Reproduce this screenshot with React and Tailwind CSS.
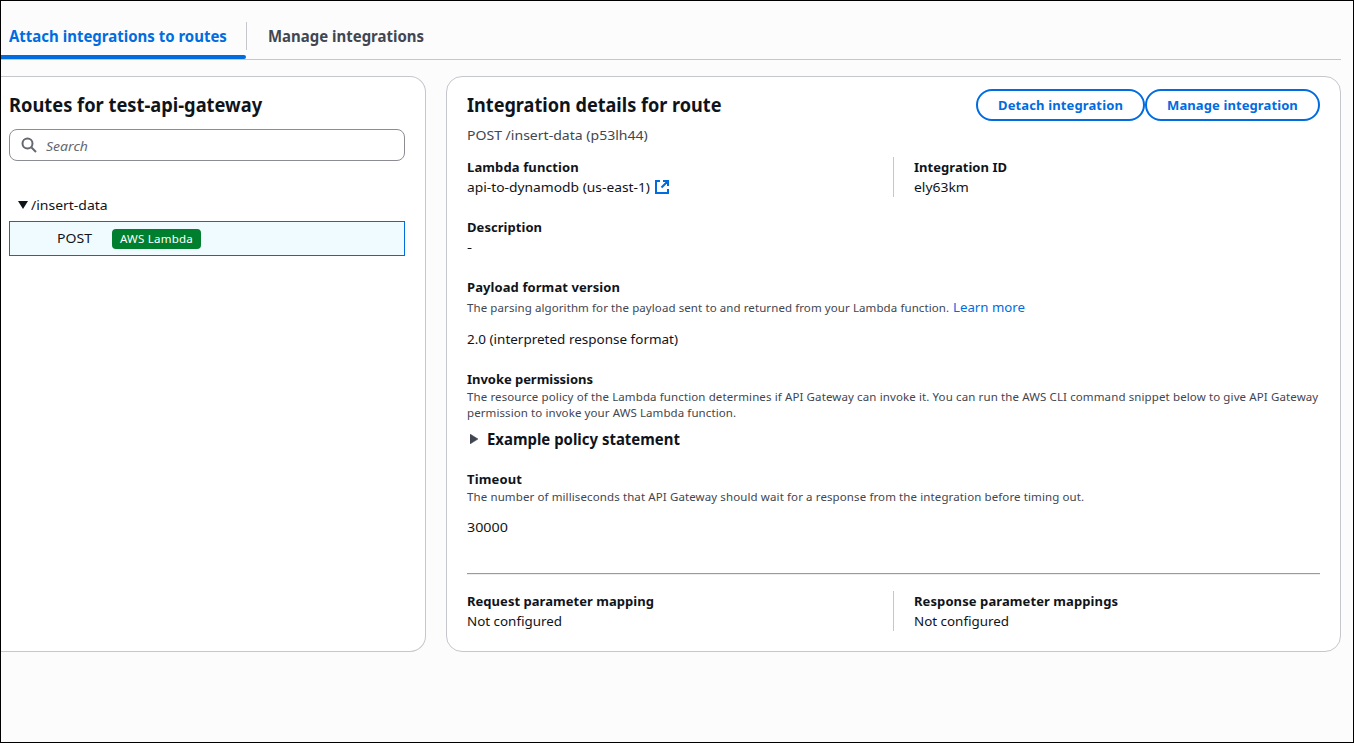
function T({ className = "", children }) {
  return <span className={"inline-block origin-left whitespace-nowrap " + className}>{children}</span>;
}

const label = "block h-5 text-[13px] leading-5 font-bold text-[#0f141a]";
const value = "block h-5 text-[13px] leading-5 text-[#0f141a]";
const hint = "block h-4 text-[11.5px] leading-4 text-[#424650]";
const button = "h-8 rounded-full border-2 border-[#006ce0] pt-px text-[13px] font-bold text-[#006ce0]";

function Pair({ children }) {
  return <div className="grid grid-cols-[426px_1fr]">{children}</div>;
}

export default function App() {
  return (
    <div className="h-[743px] w-[1354px] overflow-hidden border border-black bg-[#fcfcfd] font-['Noto_Sans',sans-serif] text-[#0f141a]">
      <nav className="mr-3 flex h-[59px] border-b border-[#c6c6cd] pt-[21px]">
        <div className="flex h-[37px] w-[245px] flex-col justify-between pt-0.5">
          <T className="ml-2 scale-x-[0.936] text-base leading-6 font-bold text-[#006ce0]">Attach integrations to routes</T>
          <div className="h-1 rounded-r-sm bg-[#006ce0]" />
        </div>
        <div className="h-7 border-l border-[#c6c6cd] pt-0.5 pl-[21px]">
          <T className="scale-x-[0.935] text-base leading-6 font-bold text-[#424650]">Manage integrations</T>
        </div>
      </nav>
      <main className="mt-4 mr-3 flex gap-5">
        <section className="h-[576px] w-[425px] rounded-r-2xl border border-l-0 border-[#c6c6cd] bg-white pt-4 pr-5 pl-2">
          <h2 className="h-6 text-[19px] leading-6 font-bold"><T className="scale-x-[0.962]">Routes for test-api-gateway</T></h2>
          <div className="mt-3 flex h-8 items-center rounded-lg border border-[#8c8c94] pl-[11px]">
            <svg className="size-4" viewBox="0 0 16 16" fill="none" stroke="#656871" strokeWidth="2"><circle cx="6.5" cy="6.5" r="5" /><path d="m10.5 10.5 4.5 4.5" /></svg>
            <span className="ml-[9px] pt-[3px] text-[13px] text-[#656871] italic"><T className="scale-x-[1.08]">Search</T></span>
          </div>
          <div className="mt-[34px] flex h-5 items-center pl-[9px]">
            <svg className="h-2 w-2.5" viewBox="0 0 10 8"><path d="M0 0h10L5 8z" fill="#0f141a" /></svg>
            <span className="ml-[3px] text-[13px] leading-5"><T className="scale-x-[1.075]">/insert-data</T></span>
          </div>
          <div className="mt-1.5 flex h-[35px] items-center border border-[#006ce0] bg-[#f0fbff] pl-[47px]">
            <span className="w-[55px] pt-px text-[13px]"><T className="scale-x-[1.08]">POST</T></span>
            <span className="h-5 w-[89px] rounded bg-[#00802f] pl-2 text-[11.5px] leading-5 tracking-[0.23px] text-white"><T>AWS Lambda</T></span>
          </div>
        </section>
        <section className="h-[576px] w-[895px] rounded-2xl border border-[#c6c6cd] bg-white px-5 pt-3">
          <div className="flex h-8 items-center">
            <h2 className="h-6 flex-1 text-[19px] leading-6 font-bold"><T className="scale-x-[0.952]">Integration details for route</T></h2>
            <button className={button + " w-[169px] tracking-[0.13px]"}><T>Detach integration</T></button>
            <button className={button + " w-[175px] tracking-[0.1px]"}><T>Manage integration</T></button>
          </div>
          <p className="mt-1 h-5 text-[13px] leading-5 text-[#424650]"><T className="scale-x-[1.08]">POST /insert-data (p53lh44)</T></p>
          <div className="mt-3">
            <Pair>
              <div>
                <p className={label + " tracking-[0.12px]"}><T>Lambda function</T></p>
                <p className={value + " flex! items-center"}>
                  <T className="scale-x-[1.062]">api-to-dynamodb (us-east-1)</T>
                  <svg className="ml-[16px] size-3.5 shrink-0" viewBox="0 0 14 14" fill="none" stroke="#006ce0" strokeWidth="2"><path d="M5 1H1v12h12V9M8 1h5v5M13 1 6.5 7.5" /></svg>
                </p>
              </div>
              <div className="border-l border-[#c6c6cd] pl-5">
                <p className={label + " tracking-[0.04px]"}><T>Integration ID</T></p>
                <p className={value}><T className="scale-x-[1.07]">ely63km</T></p>
              </div>
            </Pair>
          </div>
          <div className="mt-5">
            <p className={label + " tracking-[0.05px]"}><T>Description</T></p>
            <p className={value}><T className="scale-x-[1.2]">-</T></p>
          </div>
          <div className="mt-5">
            <p className={label + " tracking-[0.09px]"}><T>Payload format version</T></p>
            <p className="flex h-5 gap-1 text-[11.5px] leading-[21px] tracking-[0.09px] text-[#424650]">
              <T>The parsing algorithm for the payload sent to and returned from your Lambda function.</T>
              <a className="text-[13px] leading-5 tracking-normal text-[#006ce0]"><T className="scale-x-[1.018]">Learn more</T></a>
            </p>
            <p className={value + " mt-3"}><T className="scale-x-[1.037]">2.0 (interpreted response format)</T></p>
          </div>
          <div className="mt-5">
            <p className={label + " tracking-[-0.04px]"}><T>Invoke permissions</T></p>
            <p className={hint + " tracking-[0.115px]"}><T>The resource policy of the Lambda function determines if API Gateway can invoke it. You can run the AWS CLI command snippet below to give API Gateway</T></p>
            <p className={hint + " tracking-[0.09px]"}><T>permission to invoke your AWS Lambda function.</T></p>
            <p className="flex h-9 items-center text-base font-bold">
              <svg className="mr-[9px] ml-[3px] h-2.5 w-2" viewBox="0 0 8 10"><path d="M0 0v10l8-5z" fill="#424650" stroke="#424650" strokeWidth="0.5" /></svg>
              <T className="scale-x-[0.933]">Example policy statement</T>
            </p>
          </div>
          <div className="mt-3">
            <p className={label + " tracking-[0.15px]"}><T>Timeout</T></p>
            <p className={hint + " tracking-[0.11px]"}><T>The number of milliseconds that API Gateway should wait for a response from the integration before timing out.</T></p>
            <p className={value + " mt-3"}><T className="scale-x-[1.1]">30000</T></p>
          </div>
          <div className="mt-9 h-0.5 border-t border-[#9a9a9a] bg-[#eee]" />
          <div className="mt-4">
            <Pair>
              <div>
                <p className={label + " tracking-[0.035px]"}><T>Request parameter mapping</T></p>
                <p className={value}><T className="scale-x-[1.03]">Not configured</T></p>
              </div>
              <div className="border-l border-[#c6c6cd] pl-5">
                <p className={label + " tracking-[0.09px]"}><T>Response parameter mappings</T></p>
                <p className={value}><T className="scale-x-[1.03]">Not configured</T></p>
              </div>
            </Pair>
          </div>
        </section>
      </main>
    </div>
  );
}
